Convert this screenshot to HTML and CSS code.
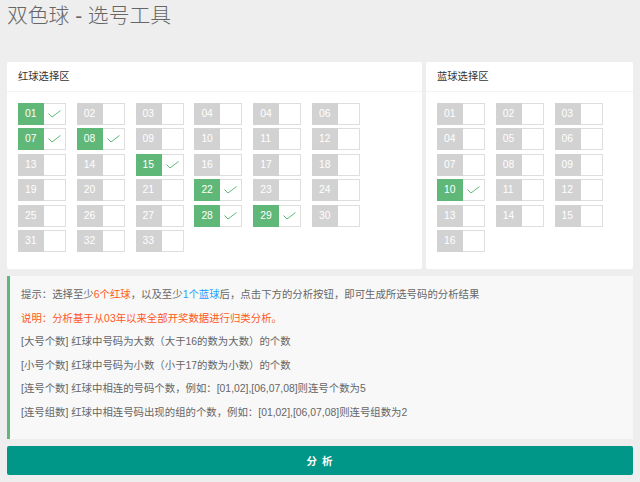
FILE: index.html
```html
<!DOCTYPE html>
<html lang="zh-CN">
<head>
<meta charset="utf-8">
<title>双色球 - 选号工具</title>
<link rel="stylesheet" href="styles.css">
</head>
<body>
<h1 class="title">双色球 - 选号工具</h1>
<div class="panels">
  <section class="card card-red">
    <div class="card-header">红球选择区</div>
    <div class="card-body">
      <div class="grid grid-red">
        <div class="ball on"><span class="num">01</span><i class="box"><svg width="13" height="8" viewBox="0 0 13 8"><polyline points="0.5,3.5 4,7 12.5,0.5" fill="none" stroke="#5FB878" stroke-width="1"/></svg></i></div>
        <div class="ball"><span class="num">02</span><i class="box"></i></div>
        <div class="ball"><span class="num">03</span><i class="box"></i></div>
        <div class="ball"><span class="num">04</span><i class="box"></i></div>
        <div class="ball"><span class="num">04</span><i class="box"></i></div>
        <div class="ball"><span class="num">06</span><i class="box"></i></div>
        <div class="ball on"><span class="num">07</span><i class="box"><svg width="13" height="8" viewBox="0 0 13 8"><polyline points="0.5,3.5 4,7 12.5,0.5" fill="none" stroke="#5FB878" stroke-width="1"/></svg></i></div>
        <div class="ball on"><span class="num">08</span><i class="box"><svg width="13" height="8" viewBox="0 0 13 8"><polyline points="0.5,3.5 4,7 12.5,0.5" fill="none" stroke="#5FB878" stroke-width="1"/></svg></i></div>
        <div class="ball"><span class="num">09</span><i class="box"></i></div>
        <div class="ball"><span class="num">10</span><i class="box"></i></div>
        <div class="ball"><span class="num">11</span><i class="box"></i></div>
        <div class="ball"><span class="num">12</span><i class="box"></i></div>
        <div class="ball"><span class="num">13</span><i class="box"></i></div>
        <div class="ball"><span class="num">14</span><i class="box"></i></div>
        <div class="ball on"><span class="num">15</span><i class="box"><svg width="13" height="8" viewBox="0 0 13 8"><polyline points="0.5,3.5 4,7 12.5,0.5" fill="none" stroke="#5FB878" stroke-width="1"/></svg></i></div>
        <div class="ball"><span class="num">16</span><i class="box"></i></div>
        <div class="ball"><span class="num">17</span><i class="box"></i></div>
        <div class="ball"><span class="num">18</span><i class="box"></i></div>
        <div class="ball"><span class="num">19</span><i class="box"></i></div>
        <div class="ball"><span class="num">20</span><i class="box"></i></div>
        <div class="ball"><span class="num">21</span><i class="box"></i></div>
        <div class="ball on"><span class="num">22</span><i class="box"><svg width="13" height="8" viewBox="0 0 13 8"><polyline points="0.5,3.5 4,7 12.5,0.5" fill="none" stroke="#5FB878" stroke-width="1"/></svg></i></div>
        <div class="ball"><span class="num">23</span><i class="box"></i></div>
        <div class="ball"><span class="num">24</span><i class="box"></i></div>
        <div class="ball"><span class="num">25</span><i class="box"></i></div>
        <div class="ball"><span class="num">26</span><i class="box"></i></div>
        <div class="ball"><span class="num">27</span><i class="box"></i></div>
        <div class="ball on"><span class="num">28</span><i class="box"><svg width="13" height="8" viewBox="0 0 13 8"><polyline points="0.5,3.5 4,7 12.5,0.5" fill="none" stroke="#5FB878" stroke-width="1"/></svg></i></div>
        <div class="ball on"><span class="num">29</span><i class="box"><svg width="13" height="8" viewBox="0 0 13 8"><polyline points="0.5,3.5 4,7 12.5,0.5" fill="none" stroke="#5FB878" stroke-width="1"/></svg></i></div>
        <div class="ball"><span class="num">30</span><i class="box"></i></div>
        <div class="ball"><span class="num">31</span><i class="box"></i></div>
        <div class="ball"><span class="num">32</span><i class="box"></i></div>
        <div class="ball"><span class="num">33</span><i class="box"></i></div>
      </div>
    </div>
  </section>
  <section class="card card-blue">
    <div class="card-header">蓝球选择区</div>
    <div class="card-body">
      <div class="grid grid-blue">
        <div class="ball"><span class="num">01</span><i class="box"></i></div>
        <div class="ball"><span class="num">02</span><i class="box"></i></div>
        <div class="ball"><span class="num">03</span><i class="box"></i></div>
        <div class="ball"><span class="num">04</span><i class="box"></i></div>
        <div class="ball"><span class="num">05</span><i class="box"></i></div>
        <div class="ball"><span class="num">06</span><i class="box"></i></div>
        <div class="ball"><span class="num">07</span><i class="box"></i></div>
        <div class="ball"><span class="num">08</span><i class="box"></i></div>
        <div class="ball"><span class="num">09</span><i class="box"></i></div>
        <div class="ball on"><span class="num">10</span><i class="box"><svg width="13" height="8" viewBox="0 0 13 8"><polyline points="0.5,3.5 4,7 12.5,0.5" fill="none" stroke="#5FB878" stroke-width="1"/></svg></i></div>
        <div class="ball"><span class="num">11</span><i class="box"></i></div>
        <div class="ball"><span class="num">12</span><i class="box"></i></div>
        <div class="ball"><span class="num">13</span><i class="box"></i></div>
        <div class="ball"><span class="num">14</span><i class="box"></i></div>
        <div class="ball"><span class="num">15</span><i class="box"></i></div>
        <div class="ball"><span class="num">16</span><i class="box"></i></div>
      </div>
    </div>
  </section>
</div>
<div class="quote">
  <p>提示：选择至少<span class="red">6个红球</span>，以及至少<span class="blue">1个蓝球</span>后，点击下方的分析按钮，即可生成所选号码的分析结果</p>
  <p class="red">说明：分析基于从03年以来全部开奖数据进行归类分析。</p>
  <p>[大号个数] 红球中号码为大数（大于16的数为大数）的个数</p>
  <p>[小号个数] 红球中号码为小数（小于17的数为小数）的个数</p>
  <p>[连号个数] 红球中相连的号码个数，例如：[01,02],[06,07,08]则连号个数为5</p>
  <p>[连号组数] 红球中相连号码出现的组的个数，例如：[01,02],[06,07,08]则连号组数为2</p>
</div>
<button class="btn">分 析</button>
</body>
</html>
```

FILE: styles.css
```css
* { box-sizing: border-box; }
html, body { margin: 0; padding: 0; }
body {
  background: #eeeeee;
  padding: 0 7px;
  font-family: "Liberation Sans", "Noto Sans CJK SC", sans-serif;
  color: #666;
  font-size: 10.3px;
}
.title {
  margin: 0;
  padding-top: 1px;
  height: 62px;
  line-height: 30px;
  font-size: 20.8px;
  font-weight: 300;
  color: #666;
}
.panels {
  display: flex;
  gap: 4px;
}
.card {
  background: #fff;
  border-radius: 2px;
}
.card-red { width: 415px; }
.card-blue { flex: 1; }
.card-header {
  height: 30px;
  line-height: 29px;
  padding-left: 11px;
  font-size: 10.3px;
  color: #333;
  border-bottom: 1px solid #f3f3f3;
}
.card-body {
  padding: 11px 11px 17px;
}
.grid {
  display: grid;
  column-gap: 10.8px;
  row-gap: 3.4px;
}
.grid-red { grid-template-columns: repeat(6, 48px); }
.grid-blue { grid-template-columns: repeat(3, 48px); }
.ball {
  display: flex;
  height: 22px;
}
.num {
  width: 26px;
  background: #d2d2d2;
  color: #fff;
  line-height: 22px;
  padding-left: 7px;
  font-size: 10.3px;
}
.ball.on .num { background: #5FB878; }
.box {
  width: 22px;
  border: 1px solid #dedede;
  border-left: none;
  background: #fff;
  display: flex;
  align-items: center;
  justify-content: center;
}
.quote {
  margin-top: 7px;
  background: #f8f8f8;
  border-left: 3.6px solid #5FB878;
  padding: 11px;
}
.quote p {
  margin: 0 0 7.6px;
  line-height: 16px;
  color: #666;
  font-size: 10.4px;
}
.quote p:last-child { margin-bottom: 7px; }
.red { color: #FF5722; }
.quote p.red { color: #FF5722; }
.blue { color: #1E9FFF; }
.btn {
  display: block;
  width: 100%;
  margin-top: 7px;
  height: 29px;
  border: none;
  border-radius: 2px;
  background: #009688;
  color: #fff;
  font-family: "Liberation Sans", "Noto Sans CJK SC", sans-serif;
  font-size: 10.5px;
  font-weight: bold;
  letter-spacing: 1px;
}
```
